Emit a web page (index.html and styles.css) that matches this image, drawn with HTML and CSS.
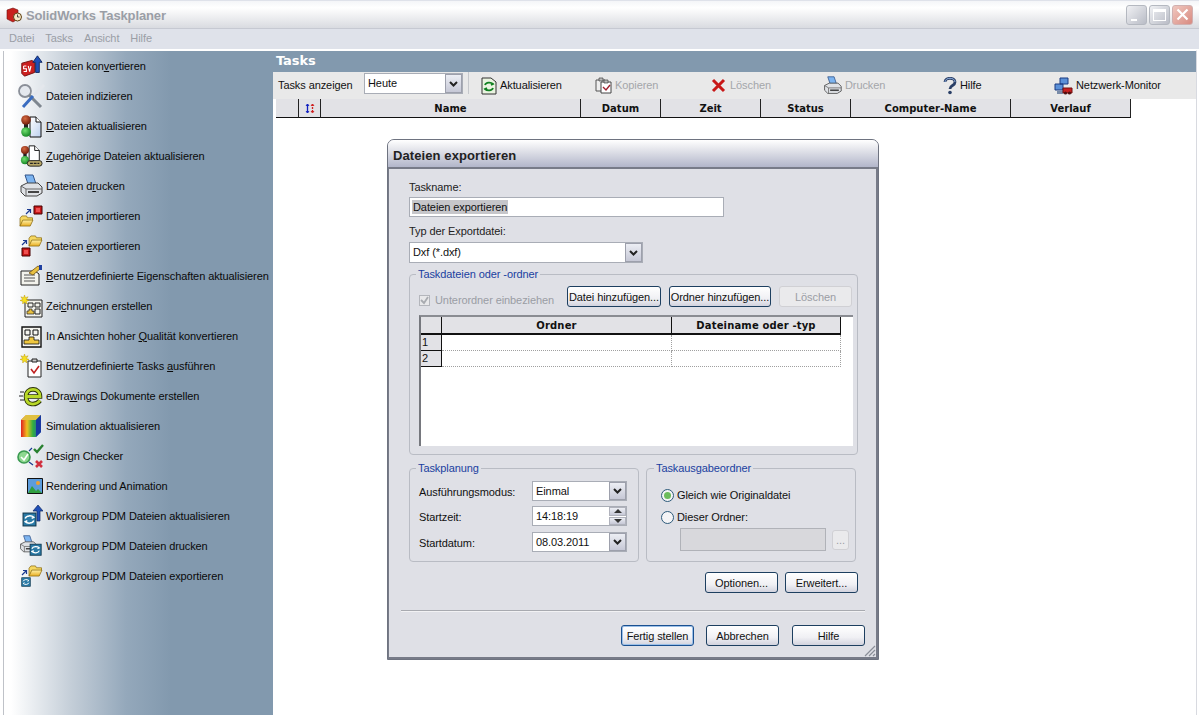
FILE: index.html
```html
<!DOCTYPE html>
<html lang="de">
<head>
<meta charset="utf-8">
<title>SolidWorks Taskplaner</title>
<link rel="stylesheet" href="styles.css">
</head>
<body>
<svg class="defs" width="0" height="0" aria-hidden="true">
  <defs>
    <linearGradient id="gFolder" x1="0" y1="0" x2="0" y2="1"><stop offset="0" stop-color="#fff2a8"/><stop offset="1" stop-color="#e8ac20"/></linearGradient>
    <linearGradient id="gPage" x1="0" y1="0" x2="1" y2="1"><stop offset="0" stop-color="#fff"/><stop offset="1" stop-color="#bcd0ee"/></linearGradient>
    <linearGradient id="gRain" x1="0" y1="0" x2="1" y2="0"><stop offset="0" stop-color="#e02020"/><stop offset=".3" stop-color="#f0c020"/><stop offset=".6" stop-color="#30b040"/><stop offset="1" stop-color="#2050c0"/></linearGradient>
    <radialGradient id="gRed" cx=".4" cy=".35" r=".7"><stop offset="0" stop-color="#d86a40"/><stop offset="1" stop-color="#6a1808"/></radialGradient>
    <radialGradient id="gGreen" cx=".4" cy=".35" r=".7"><stop offset="0" stop-color="#70e070"/><stop offset="1" stop-color="#108020"/></radialGradient>
    <symbol id="folder" viewBox="0 0 16 13"><path d="M1 3.500 3 1h5l1 2h5.500v3H5L1 12z" fill="#f6d860" stroke="#8a6a10" stroke-width=".8"/><path d="M1 12 4 5.500h11L12 12z" fill="url(#gFolder)" stroke="#8a6a10" stroke-width=".8"/></symbol>
    <symbol id="redbox" viewBox="0 0 10 10"><path d="M1 1h8v8H1z" fill="#c81818" stroke="#400" stroke-width="1"/><path d="M3 3h4v4H3z" fill="#f05050"/></symbol>
    <symbol id="printer" viewBox="0 0 24 24"><path d="M6 1h8l3 9H9z" fill="#7cb4f0" stroke="#33558a"/><path d="M2 12 8 9h11l4 4v6l-5 3H6l-4-4z" fill="#dfe2e6" stroke="#444"/><path d="M2 12l5 3h16M7 15v7" fill="none" stroke="#666"/><path d="M9 17h11v2H9z" fill="#444"/></symbol>
    <symbol id="sync" viewBox="0 0 14 14"><rect x="1" y="1" width="12" height="12" fill="#2a7aa6" stroke="#103850"/><path d="M3 6c1-3 6-3 8-1l-2 1M11 8c-1 3-6 3-8 1l2-1" fill="none" stroke="#fff" stroke-width="1.400"/></symbol>
    <symbol id="light" viewBox="0 0 12 24"><rect x="4" y="6" width="4" height="12" fill="#222"/><circle cx="6" cy="6" r="4.800" fill="url(#gRed)"/><circle cx="6" cy="18" r="4.800" fill="url(#gGreen)"/></symbol>
    <symbol id="sun" viewBox="0 0 10 10"><path d="M5 0l1 3 3-1-2 3 3 1-3 1 1 3-3-2-2 2 0-3-3-1 3-1-2-3 3 1z" fill="#f6e020" stroke="#b89000" stroke-width=".5"/></symbol>
    <symbol id="chev" viewBox="0 0 9 6"><path d="M1 1l3.500 3.500L8 1" fill="none" stroke="#222" stroke-width="2"/></symbol>
  </defs>
</svg>

<div class="app">
  <header class="titlebar">
    <svg class="appicon" viewBox="0 0 16 16"><path d="M1 3l6-2 5 2v9l-5 3-6-3z" fill="#c8201c" stroke="#701010" stroke-width=".6"/><circle cx="11.500" cy="10" r="4" fill="#f4e8c8" stroke="#604010"/><path d="M11.500 7.500V10h2" fill="none" stroke="#222" stroke-width=".8"/></svg>
    <span class="apptitle">SolidWorks Taskplaner</span>
    <div class="winbtns">
      <span class="winbtn"><i class="w-min"></i></span>
      <span class="winbtn"><i class="w-max"></i></span>
      <span class="winbtn close"><svg viewBox="0 0 13 13" width="13" height="13"><path d="M1.500 1.500l10 10M11.500 1.500l-10 10" stroke="#fff" stroke-width="2.200"/></svg></span>
    </div>
  </header>

  <nav class="menubar">
    <span>Datei</span><span>Tasks</span><span>Ansicht</span><span>Hilfe</span>
  </nav>

  <div class="main">
    <aside class="sidebar">
      <div class="item"><span class="ic"><svg viewBox="0 0 26 24"><path d="M3 9l11-3 3 2v11l-11 4-3-3z" fill="#cc2020" stroke="#701010"/><path d="M20 1l5 7h-3v11h-4V8h-3z" fill="#2050b8" stroke="#102860"/><path d="M5 12h3M5 12v3h3v3H5M10 12l1.500 6 1.500-6" fill="none" stroke="#fff" stroke-width="1.200"/></svg></span><span>Dateien kon<u>v</u>ertieren</span></div>
      <div class="item"><span class="ic wide"><svg viewBox="0 0 28 26"><circle cx="8" cy="8" r="6" fill="#e4e8ee" stroke="#8a8f98" stroke-width="1.800"/><path d="M12 12l12 12" stroke="#7e868f" stroke-width="3"/><path d="M27 2 17 12" stroke="#e4e7ec" stroke-width="3"/><path d="M16 13 6 24" stroke="#3a6cc0" stroke-width="3"/></svg></span><span>Dateien indizieren</span></div>
      <div class="item"><span class="ic"><svg viewBox="0 0 24 24"><path d="M11 3h6l5 5v15H11z" fill="url(#gPage)" stroke="#111"/><path d="M17 3v5h5" fill="#fff" stroke="#111"/><use href="#light" x="1" y="0" width="12" height="24"/></svg></span><span><u>D</u>ateien aktualisieren</span></div>
      <div class="item"><span class="ic"><svg viewBox="0 0 26 24"><path d="M11 1h6l5 5v14H11z" fill="#fff" stroke="#111"/><path d="M17 1v5h5" fill="#fff" stroke="#111"/><use href="#light" x="1" y="0" width="11" height="22"/><rect x="9" y="17" width="16" height="6" rx="3" fill="#b8a868" stroke="#222"/><path d="M12 20h10" stroke="#222" stroke-width="1.500" stroke-dasharray="3 1"/></svg></span><span><u>Z</u>ugehörige Dateien aktualisieren</span></div>
      <div class="item"><span class="ic"><svg viewBox="0 0 24 24"><use href="#printer" width="24" height="24"/></svg></span><span>Dateien d<u>r</u>ucken</span></div>
      <div class="item"><span class="ic"><svg viewBox="0 0 24 24"><use href="#folder" x="0" y="11" width="15" height="12"/><use href="#redbox" x="14" y="1" width="10" height="10"/><path d="M7 10l4-4M8 5.500h3.500V9" fill="none" stroke="#1a3a90" stroke-width="1.200"/></svg></span><span>Dateien <u>i</u>mportieren</span></div>
      <div class="item"><span class="ic"><svg viewBox="0 0 24 24"><use href="#folder" x="9" y="1" width="15" height="12"/><use href="#redbox" x="2" y="13" width="10" height="10"/><path d="M3 11l4-4M4 6.500h3.500V10" fill="none" stroke="#1a3a90" stroke-width="1.200"/></svg></span><span>Dateien <u>e</u>xportieren</span></div>
      <div class="item"><span class="ic"><svg viewBox="0 0 24 24"><path d="M2 7h14l4 3v11H2z" fill="#f2f2ec" stroke="#222"/><path d="M5 11h11M5 14h11M5 17h11" stroke="#555"/><path d="M10 9l9-7 3 2-8 7z" fill="#e8c040" stroke="#705010" stroke-width=".8"/><path d="M20 1h3v5h-3z" fill="#2040a0"/></svg></span><span><u>B</u>enutzerdefinierte Eigenschaften aktualisieren</span></div>
      <div class="item"><span class="ic"><svg viewBox="0 0 24 24"><path d="M6 6h17v17H6z" fill="#f2f2ec" stroke="#222"/><path d="M9 9h5v4H9zM16 9h5v4h-5zM16 15h5v5h-5z" fill="none" stroke="#222"/><path d="M8 20v-3h2v-2h3v2h2v3z" fill="#e8c040" stroke="#222" stroke-width=".7"/><use href="#sun" x="1" y="1" width="9" height="9"/></svg></span><span>Zei<u>c</u>hnungen erstellen</span></div>
      <div class="item"><span class="ic"><svg viewBox="0 0 24 24"><path d="M3 3h19v20H3z" fill="#f6f6f0" stroke="#111" stroke-width="1.400"/><path d="M6 6h5v5H6zM14 6h5v5h-5z" fill="none" stroke="#111"/><path d="M5 20v-4h5v-3h5v3h5v4z" fill="#f0c840" stroke="#111" stroke-width=".8"/></svg></span><span>In Ansichten hoher <u>Q</u>ualität konvertieren</span></div>
      <div class="item"><span class="ic"><svg viewBox="0 0 24 24"><path d="M9 7h13v16H9z" fill="#fff" stroke="#222"/><path d="M13 5h5v3h-5z" fill="#ccc" stroke="#222"/><path d="M12 15l3 4 5-7" fill="none" stroke="#c02020" stroke-width="1.600"/><use href="#sun" x="1" y="0" width="9" height="9"/></svg></span><span>Benutzerdefinierte Tasks <u>a</u>usführen</span></div>
      <div class="item"><span class="ic"><svg viewBox="0 0 24 24"><path d="M1 8h4M0 12h4M1 16h4" stroke="#222"/><path d="M7 12.500h14C21 3 7 3 7 12.500s10 9 14 4" fill="none" stroke="#2a3008" stroke-width="4.600"/><path d="M7 12.500h14C21 3 7 3 7 12.500s10 9 14 4" fill="none" stroke="#b8d828" stroke-width="2.800"/></svg></span><span>eDra<u>w</u>ings Dokumente erstellen</span></div>
      <div class="item"><span class="ic"><svg viewBox="0 0 24 24"><path d="M2 6l5-5h15v17l-5 5H2z" fill="url(#gRain)"/><path d="M2 6l5-5h15l-5 5z" fill="#e0c040"/><path d="M17 6l5-5v17l-5 5z" fill="#1838a0"/></svg></span><span>Simulation aktualisieren</span></div>
      <div class="item"><span class="ic wide"><svg viewBox="0 0 28 26"><circle cx="7" cy="14" r="6" fill="#8ed890" stroke="#3a9a50" stroke-width="1.600"/><path d="M4 14l3 3 4-6" fill="none" stroke="#fff" stroke-width="1.600"/><path d="M17 6l3 3 6-7" fill="none" stroke="#288030" stroke-width="2.400"/><path d="M19 18l6 6M25 18l-6 6" stroke="#d03040" stroke-width="2.600"/><path d="M12 8l3-3M12 19l4 3" stroke="#1a3a90" stroke-width="1.200"/></svg></span><span>Design Checker</span></div>
      <div class="item"><span class="ic small"><svg viewBox="0 0 16 16"><path d="M.5.500h15v15H.5z" fill="#5c9cdc" stroke="#111"/><circle cx="11" cy="5" r="2" fill="#f0a030"/><path d="M1 15l4-7 4 5 2-2 4 4z" fill="#30a040"/></svg></span><span>Rendering und Animation</span></div>
      <div class="item"><span class="ic"><svg viewBox="0 0 24 24"><use href="#sync" x="3" y="8" width="15" height="15"/><path d="M19 1l5 6h-3v10h-3V7h-4z" fill="#2050b8" stroke="#102860" stroke-width=".7"/></svg></span><span>Workgroup PDM Dateien aktualisieren</span></div>
      <div class="item"><span class="ic"><svg viewBox="0 0 26 24"><use href="#printer" width="20" height="20"/><use href="#sync" x="11" y="9" width="14" height="14"/></svg></span><span>Workgroup PDM Dateien drucken</span></div>
      <div class="item"><span class="ic"><svg viewBox="0 0 24 24"><use href="#folder" x="9" y="1" width="15" height="12"/><use href="#sync" x="2" y="13" width="10" height="10"/><path d="M3 11l4-4M4 6.500h3.500V10" fill="none" stroke="#1a3a90" stroke-width="1.200"/></svg></span><span>Workgroup PDM Dateien exportieren</span></div>
    </aside>

    <section class="content">
      <h1 class="paneltitle">Tasks</h1>
      <div class="toolbar">
        <span class="tb-label">Tasks anzeigen</span>
        <div class="combo tb-combo"><span class="combo-val">Heute</span><span class="drop"><svg width="9" height="6"><use href="#chev" width="9" height="6"/></svg></span></div>
        <span class="tb-sep"></span>
        <div class="tool w114"><svg width="16" height="18" viewBox="0 0 16 18"><path d="M1 1h9l5 4v12H1z" fill="#eaf4e0" stroke="#333"/><path d="M4 8c1-3 6-3 8-1l-2 1M12 11c-1 3-6 3-8 1l2-1" fill="none" stroke="#108020" stroke-width="1.800"/></svg><span>Aktualisieren</span></div>
        <div class="tool w116 off"><svg width="17" height="17" viewBox="0 0 17 17"><path d="M1 3h9v11H1z" fill="#eee" stroke="#555"/><path d="M6 5h10v11H6z" fill="#fff" stroke="#444"/><path d="M4 1h4v3H4zM9 3h4v3H9z" fill="#bbb" stroke="#444" stroke-width=".7"/><path d="M8 10l3 3 4-5" fill="none" stroke="#a02030" stroke-width="1.400"/></svg><span>Kopieren</span></div>
        <div class="tool w112 off"><svg width="15" height="15" viewBox="0 0 15 15"><path d="M2 2l11 11M13 2 2 13" stroke="#c81818" stroke-width="3"/></svg><span class="lo">Löschen</span></div>
        <div class="tool w120 off"><svg width="19" height="19"><use href="#printer" width="19" height="19"/></svg><span>Drucken</span></div>
        <div class="tool w111"><svg width="14" height="18" viewBox="0 0 14 18"><path d="M2 5c0-5 10-5 10 0 0 4-5 3-5 7" fill="none" stroke="#2a3f66" stroke-width="2.800"/><path d="M2 5c0-5 10-5 10 0" fill="none" stroke="#8fb0e0" stroke-width="1"/><circle cx="7" cy="15.500" r="1.800" fill="#2a3f66"/></svg><span>Hilfe</span></div>
        <div class="tool"><svg width="19" height="18" viewBox="0 0 19 18"><path d="M6 1h8v6H6zM1 7h8v6H1z" fill="#5a90d8" stroke="#1a3a80"/><path d="M3 14h6v3H3z" fill="#7a8ca8"/><path d="M9 11h9v5H9z" fill="#c82020" stroke="#701010"/><circle cx="11.500" cy="16" r="1.600" fill="#501010"/><circle cx="15.500" cy="16" r="1.600" fill="#501010"/></svg><span>Netzwerk-Monitor</span></div>
      </div>
      <div class="tasktable">
        <div class="th"></div>
        <div class="th"><svg width="10" height="11" viewBox="0 0 10 11"><path d="M2.500 1v9" stroke="#1020c0" stroke-width="1.300"/><path d="M1 3l1.500-2L4 3M1 8l1.500 2L4 8" fill="none" stroke="#1020c0"/><path d="M7.500 1v9" stroke="#d02020" stroke-dasharray="2 1" stroke-width="1.300"/><path d="M6 3l1.500-2L9 3M6 8l1.500 2L9 8" fill="none" stroke="#d02020"/></svg></div>
        <div class="th">Name</div><div class="th">Datum</div><div class="th">Zeit</div><div class="th">Status</div><div class="th">Computer-Name</div><div class="th">Verlauf</div>
      </div>
    </section>
  </div>

  <div class="dialog">
    <div class="dlg-title">Dateien exportieren</div>
    <div class="dlg-body">
      <label class="lbl lbl-first">Taskname:</label>
      <div class="field name-field"><span class="selected">Dateien exportieren</span></div>
      <label class="lbl lbl-type">Typ der Exportdatei:</label>
      <div class="combo type-combo"><span class="combo-val">Dxf (*.dxf)</span><span class="drop"><svg width="9" height="6"><use href="#chev" width="9" height="6"/></svg></span></div>

      <fieldset class="group files">
        <legend>Taskdateien oder -ordner</legend>
        <div class="filebar">
          <span class="check"><i class="cb"><svg width="9" height="9" viewBox="0 0 9 9"><path d="M1 4l3 3 4-6" fill="none" stroke="#a8abb0" stroke-width="1.800"/></svg></i>Unterordner einbeziehen</span>
          <button class="btn b94">Datei hinzufügen...</button>
          <button class="btn b102">Ordner hinzufügen...</button>
          <button class="btn b73 dis">Löschen</button>
        </div>
        <div class="gridbox">
          <div class="gh"></div><div class="gh">Ordner</div><div class="gh">Dateiname oder -typ</div>
          <div class="rn">1</div><div class="gc"></div><div class="gc"></div>
          <div class="rn">2</div><div class="gc"></div><div class="gc"></div>
        </div>
      </fieldset>

      <div class="twogroups">
        <fieldset class="group plan">
          <legend>Taskplanung</legend>
          <div class="planrow"><span>Ausführungsmodus:</span><div class="combo s95"><span class="combo-val">Einmal</span><span class="drop"><svg width="9" height="6"><use href="#chev" width="9" height="6"/></svg></span></div></div>
          <div class="planrow"><span>Startzeit:</span><div class="combo s95"><span class="combo-val">14:18:19</span><span class="spin"><i><b class="up"></b></i><i><b class="down"></b></i></span></div></div>
          <div class="planrow"><span>Startdatum:</span><div class="combo s95"><span class="combo-val">08.03.2011</span><span class="drop"><svg width="9" height="6"><use href="#chev" width="9" height="6"/></svg></span></div></div>
        </fieldset>
        <fieldset class="group out">
          <legend>Taskausgabeordner</legend>
          <div class="radio"><i class="rd on"></i>Gleich wie Originaldatei</div>
          <div class="radio r2"><i class="rd"></i>Dieser Ordner:</div>
          <div class="pathrow"><span class="pathbox"></span><button class="btn dots dis">...</button></div>
        </fieldset>
      </div>

      <div class="btnrow opt">
        <button class="btn b73">Optionen...</button>
        <button class="btn b73">Erweitert...</button>
      </div>
      <hr class="sep">
      <div class="btnrow foot">
        <button class="btn b73 def">Fertig stellen</button>
        <button class="btn b73">Abbrechen</button>
        <button class="btn b73">Hilfe</button>
      </div>
      <svg class="grip" width="13" height="13" viewBox="0 0 13 13"><path d="M12 2 2 12M12 6 6 12M12 10l-2 2" stroke="#8a8e98" stroke-width="1.200"/></svg>
    </div>
  </div>
</div>
</body>
</html>
```
FILE: styles.css
```css
* { box-sizing: border-box; }
html, body { margin: 0; padding: 0; background: #fff; }
body { font: 11px/13px "Liberation Sans", Arial, sans-serif; letter-spacing: -.09px; color: #111; overflow: hidden; }
.defs { position: absolute; }
.app { position: relative; width: 1199px; height: 715px; display: flex; flex-direction: column; overflow: hidden; background: #fff; }

.titlebar { height: 28px; display: flex; align-items: center; padding: 0 6px 0 6px; background: linear-gradient(#f4f5f8 0, #ffffff 25%, #d9dbe0 100%); border-top: 1px solid #dfe2ea; }
.appicon { width: 16px; height: 16px; }
.apptitle { margin-left: 4px; padding-top: 1px; font: bold 13px "Liberation Sans", sans-serif; letter-spacing: -.13px; color: #9a9ea6; }
.winbtns { margin-left: auto; display: flex; gap: 2px; }
.winbtn { width: 21px; height: 20px; border: 1px solid #b4b8c0; border-radius: 3px; background: linear-gradient(135deg, #f0f1f4, #b9bcc6); display: flex; align-items: center; justify-content: center; }
.winbtn.close { background: linear-gradient(135deg, #f0c8c0, #d88a80); border-color: #d0b0b0; }
.w-min { width: 6px; height: 2px; background: #fff; margin: 10px 6px 0 0; }
.w-max { width: 13px; height: 12px; border: 1px solid #fff; border-top-width: 3px; }

.menubar { height: 22px; display: flex; gap: 11px; align-items: center; padding: 0 0 1px 9px; background: #dfe2ea; color: #9a9ea6; border-top: 1px solid #c6c9d2; border-bottom: 1px solid #fff; }

.main { flex: 1; display: flex; min-height: 0; border-left: 1px solid transparent; background: #fff; }
.sidebar { width: 272px; background: linear-gradient(90deg, #fff 0, #fff 10px, #c4ced8 70px, #94a8bb 125px, #8299ae 170px); border-top: 1px solid #fff; box-shadow: inset 2px 0 0 #fff, inset 3px 0 0 #bfc2c8; }
.item { height: 30px; display: flex; align-items: center; padding-left: 14px; color: #0a0a0a; white-space: nowrap; }
.ic { width: 31px; height: 26px; flex: none; display: flex; align-items: center; justify-content: center; }
.ic svg { width: 24px; height: 24px; }
.ic.wide svg { width: 28px; height: 26px; }
.ic.small { padding-left: 8px; }
.ic.small svg { width: 16px; height: 16px; }
u { text-decoration: underline; }

.content { flex: 1; min-width: 0; border-top: 1px solid #fff; margin-right: 2px; border-right: 1px solid #d8dae0; }
.paneltitle { margin: 0; height: 21px; padding: 1px 0 0 3px; background: #8299ae; color: #fff; font: bold 13px/18px "DejaVu Sans", sans-serif; letter-spacing: -.1px; }
.toolbar { height: 27px; display: flex; align-items: center; padding: 0 0 0 5px; background: #e9e9e9; }
.tb-label { width: 86px; flex: none; }
.combo { display: flex; align-items: center; height: 21px; background: #fff; border: 1px solid #a9adb6; flex: none; }
.combo-val { flex: 1; padding-left: 3px; }
.drop { width: 17px; height: 19px; background: linear-gradient(#eceef4, #c6c8d6); border: 1px solid #9da0ac; display: flex; align-items: center; justify-content: center; flex: none; }
.tb-combo { width: 99px; height: 21px; align-self: flex-start; margin-top: 1px; }
.tb-sep { width: 1px; height: 22px; background: #c6c8cc; margin: 0 12px 0 5px; align-self: flex-start; }
.tool { display: flex; align-items: center; gap: 3px; flex: none; white-space: nowrap; }
.tool.off { color: #a4a6aa; }
.tool .lo { margin-left: 1px; }
.w114 { width: 114px; } .w116 { width: 116px; } .w112 { width: 112px; } .w120 { width: 120px; } .w111 { width: 111px; }

.tasktable { margin-left: 3px; width: 855px; display: grid; grid-template-columns: 23px 22px 260px 80px 100px 90px 160px 120px; height: 19px; }
.th { background: #e2e2e6; border-right: 1px solid #222; border-bottom: 1px solid #111; display: flex; align-items: center; justify-content: center; font: bold 10px "DejaVu Sans", sans-serif; letter-spacing: 0; color: #111; }

.dialog { position: absolute; left: 387px; top: 139px; width: 492px; height: 521px; display: flex; flex-direction: column; border: 1px solid #6e7380; border-radius: 7px 7px 0 0; background: #dfe0e6; }
.dlg-title { height: 27px; flex: none; padding: 6px 0 0 5px; background: linear-gradient(#fff 0, #e8e9ee 30%, #b2b6ca 100%); border-radius: 6px 6px 0 0; font: bold 13px/20px "Liberation Sans", sans-serif; letter-spacing: .1px; color: #222; }
.dlg-body { flex: 1; position: relative; padding: 12px 21px 0 20px; border: 2px solid #777b88; border-left-width: 1px; border-right-width: 2px; background: #dfe0e6; display: flex; flex-direction: column; align-items: flex-start; }
.lbl { display: block; height: 13px; line-height: 13px; color: #222; }
.name-field { width: 315px; height: 20px; margin-top: 3px; background: #fff; border: 1px solid #a9adb6; padding: 2px; }
.selected { background: #c6c6ca; display: inline-block; height: 14px; padding: 0 1px; color: #111; line-height: 14px; }
.lbl-type { margin-top: 8px; }
.type-combo { width: 234px; margin-top: 4px; }
.type-combo .combo-val { padding-left: 3px; }

.group { margin: 0; border: 1px solid #b9bcc4; border-radius: 4px; min-width: 0; }
.group legend { color: #1a40a0; padding: 0 2px; margin-left: -3px; line-height: 13px; white-space: nowrap; }
.files { width: 449px; height: 187px; margin-top: 5px; padding: 5px 5px 0 9px; }
.filebar { display: flex; align-items: center; height: 21px; }
.filebar .check { width: 148px; color: #9a9da4; display: flex; align-items: center; padding-top: 8px; flex: none; }
.cb { width: 11px; height: 11px; border: 1px solid #b4b6bc; background: #e8e8ea; margin-right: 5px; display: flex; align-items: center; justify-content: center; }
.btn { height: 21px; padding: 1px 0 0; font: inherit; letter-spacing: inherit; color: #111; border: 1px solid #1d3f60; border-radius: 3px; background: linear-gradient(#fff, #f0f0f4 60%, #d2d3de); white-space: nowrap; flex: none; }
.b94 { width: 94px; margin-right: 8px; }
.b102 { width: 102px; margin-right: 8px; }
.b73 { width: 73px; }
.btn.dis { border-color: #d0d0d4; background: #eaeaec; color: #9a9da4; }
.gridbox { width: 434px; height: 131px; margin-top: 8px; background: #fff; border-top: 2px solid #8a8c92; border-left: 2px solid #76787e; display: grid; grid-template-columns: 21px 230px 169px; grid-template-rows: 18px 16px 16px; align-content: start; justify-content: start; }
.gh { background: #e2e2e6; border-right: 1px solid #111; border-bottom: 2px solid #111; display: flex; align-items: center; justify-content: center; font: bold 10px "DejaVu Sans", sans-serif; letter-spacing: .15px; }
.rn { background: #e2e2e6; border-right: 1px solid #111; border-bottom: 1px solid #111; padding-left: 1px; line-height: 15px; }
.gc { border-right: 1px dotted #a0a0a0; border-bottom: 1px dotted #a0a0a0; }

.twogroups { display: flex; gap: 7px; margin-top: 7px; align-items: flex-start; }
.plan { width: 230px; height: 100px; padding: 6px 11px 0 9px; }
.out { width: 210px; height: 100px; padding: 13px 6px 0 14px; }
.out legend { margin-left: -7px; }
.planrow { display: flex; align-items: center; justify-content: space-between; height: 20px; margin-bottom: 6px; }
.plan legend + .planrow { margin-bottom: 5px; }
.planrow > span { padding-top: 2px; }
.s95 { width: 95px; height: 20px; }
.s95 .drop { height: 18px; }
.spin { width: 17px; height: 18px; display: flex; flex-direction: column; gap: 1px; flex: none; }
.spin i { flex: 1; background: linear-gradient(#eceef4, #c6c8d6); border: 1px solid #b0b2bc; display: flex; align-items: center; justify-content: center; }
.spin b { width: 0; height: 0; border-left: 4px solid transparent; border-right: 4px solid transparent; }
.spin b.up { border-bottom: 4px solid #333; }
.spin b.down { border-top: 4px solid #333; }
.radio { display: flex; align-items: center; height: 15px; gap: 3px; }
.r2 { margin-top: 7px; }
.rd { width: 13px; height: 13px; border-radius: 50%; border: 1px solid #2d5a7a; background: #f4f4f6; display: flex; align-items: center; justify-content: center; }
.rd.on::after { content: ""; width: 7px; height: 7px; border-radius: 50%; background: #6cbc5c; }
.pathrow { display: flex; align-items: center; gap: 6px; margin: 3px 0 0 19px; }
.pathbox { width: 147px; height: 23px; background: #d8d8dc; border: 1px solid #b0b2b8; }
.btn.dots { width: 17px; height: 20px; }

.btnrow { display: flex; align-self: flex-end; }
.opt { gap: 7px; margin-top: 10px; margin-right: -3px; }
.sep { width: 464px; align-self: flex-start; margin: 17px 0 0 -8px; border: 0; border-top: 1px solid #a8aab0; border-bottom: 1px solid #f2f2f4; height: 2px; }
.foot { gap: 12px; margin-top: 13px; margin-right: -10px; }
.foot .btn:last-child { margin-left: 1px; }
.btn.def { border-color: #1a5090; box-shadow: inset 0 0 0 1px #9cc0e8; }
.grip { position: absolute; right: 0; bottom: 0; }
```
